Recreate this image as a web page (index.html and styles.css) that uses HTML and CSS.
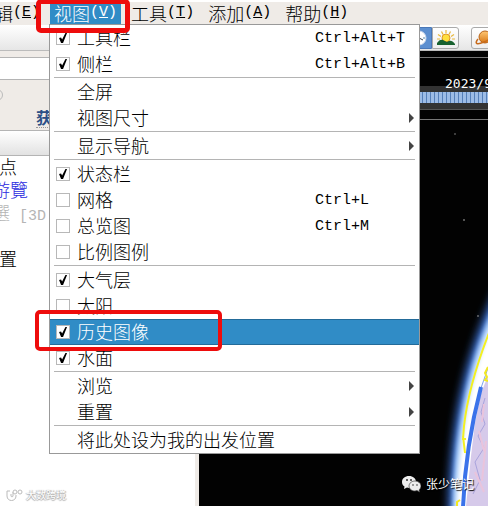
FILE: index.html
```
<!DOCTYPE html>
<html lang="zh-CN">
<head>
  <meta charset="UTF-8" />
  <meta name="viewport" content="width=device-width, initial-scale=1.0"/>
  <title>Earth</title>
  <link rel="stylesheet" href="styles.css">
</head>
<body>
  <nav class="menubar">
    <button class="menu-btn first">辑<span class="mono">(<u>E</u>)</span></button>
    <div class="menu-wrap">
      <button class="menu-btn active">视图<span class="mono">(<u>V</u>)</span></button>
      <div class="menu">
        <label class="item"><input type="checkbox" checked><span class="name">工具栏</span><span class="mono key">Ctrl+Alt+T</span></label>
        <label class="item"><input type="checkbox" checked><span class="name">侧栏</span><span class="mono key">Ctrl+Alt+B</span></label>
        <hr>
        <button class="item plain">全屏</button>
        <button class="item plain sub">视图尺寸</button>
        <hr>
        <button class="item plain sub">显示导航</button>
        <hr>
        <label class="item"><input type="checkbox" checked><span class="name">状态栏</span></label>
        <label class="item"><input type="checkbox"><span class="name">网格</span><span class="mono key">Ctrl+L</span></label>
        <label class="item"><input type="checkbox"><span class="name">总览图</span><span class="mono key">Ctrl+M</span></label>
        <label class="item"><input type="checkbox"><span class="name">比例图例</span></label>
        <hr>
        <label class="item"><input type="checkbox" checked><span class="name">大气层</span></label>
        <label class="item"><input type="checkbox"><span class="name">太阳</span></label>
        <label class="item selected"><input type="checkbox" checked><span class="name">历史图像</span></label>
        <label class="item"><input type="checkbox" checked><span class="name">水面</span></label>
        <hr>
        <button class="item plain sub">浏览</button>
        <button class="item plain sub">重置</button>
        <hr>
        <button class="item plain">将此处设为我的出发位置</button>
      </div>
      <div class="mark mark-title"></div>
      <div class="mark mark-item"></div>
    </div>
    <button class="menu-btn">工具<span class="mono">(<u>T</u>)</span></button>
    <button class="menu-btn">添加<span class="mono">(<u>A</u>)</span></button>
    <button class="menu-btn">帮助<span class="mono">(<u>H</u>)</span></button>
  </nav>

  <div class="toolbar">
    <button class="tool pressed" aria-label="历史图像">
      <svg width="20" height="20" viewBox="0 0 20 20">
        <circle cx="10" cy="10" r="7" fill="#fff" stroke="#c9d6ea"/>
        <path d="M10 10V5M10 10l4 2" stroke="#345" fill="none"/>
        <path d="M14 10h2M10 14v2" stroke="#58a"/>
      </svg>
    </button>
    <button class="tool" aria-label="太阳">
      <svg width="20" height="18" viewBox="0 0 20 18">
        <path d="M10 1v3M5.500 2.500l1.500 3M14.500 2.500l-1.500 3M2 5.500l3 2M18 5.500l-3 2M1 10h3M19 10h-3" stroke="#e9b93c" stroke-width="1.200"/>
        <circle cx="10" cy="9" r="4" fill="#ffdf3d" stroke="#e0962a"/>
        <path d="M1 16v-2c2-3 4-4 6-3l4 2c3-2 5-2 8 2v1z" fill="#17612f"/>
      </svg>
    </button>
    <button class="tool planet" aria-label="行星">
      <svg width="24" height="20" viewBox="0 0 24 20">
        <defs>
          <linearGradient id="saturn" x1="0" y1="0" x2="0" y2="1">
            <stop offset="0" stop-color="#ffc875"/>
            <stop offset="1" stop-color="#d87816"/>
          </linearGradient>
        </defs>
        <circle cx="12" cy="9" r="6" fill="url(#saturn)" stroke="#b8641a"/>
        <path d="M5 11c-4 5-1 6 6 3s14-9 11-11c-1-1-3 0-5 1" fill="none" stroke="#c76b1c" stroke-width="1.500"/>
      </svg>
    </button>
  </div>

  <main class="main">
    <aside class="sidebar">
      <div class="search"></div>
      <div class="hints">
        <span class="ring"></span>
        <a href="#" class="directions">获</a>
      </div>
      <div class="panel-head"></div>
      <ul class="tree">
        <li>点</li>
        <li class="cut"><a href="#">游覽</a></li>
        <li class="cut off">選<span class="mono"> [3D</span></li>
        <li></li>
        <li>置</li>
      </ul>
      <div class="brand">
        <svg width="17" height="13" viewBox="0 0 17 13">
          <path d="M4 2H1v5c0 6 9 6 9 0V6M5 5v2c0 1 2 1 2 0V3" fill="none" stroke="#bbb"/>
          <circle cx="9" cy="3" r="2" fill="#fff" stroke="#bbb"/>
          <circle cx="14" cy="3" r="2" fill="#fff" stroke="#bbb"/>
        </svg>
        <span>大数跨境</span>
      </div>
    </aside>

    <section class="view">
      <svg class="globe" width="60" height="270" viewBox="0 -50 60 270">
        <defs>
          <filter id="glow" x="-50%" y="-20%" width="200%" height="140%"><feGaussianBlur stdDeviation="4"/></filter>
          <filter id="edge" x="-50%" y="-20%" width="200%" height="140%"><feGaussianBlur stdDeviation="2"/></filter>
        </defs>
        <!-- atmosphere -->
        <path d="M74 -10C44 52 20 118 20 240H90V-10z" fill="#3a70d0" filter="url(#glow)"/>
        <path d="M74 2C47 58 25 122 24 240H90V2z" fill="#a9cdfa" filter="url(#edge)"/>
        <path d="M74 14C51 63 30 125 28 240H90V14z" fill="#fff" filter="url(#edge)"/>
        <!-- sea and land -->
        <path d="M60 90L53 107 47 137 43 170 38 220H60z" fill="#d6caea"/>
        <path d="M57 112l-4 14 4 12-7 12 6 12-9 14 5 18-7 14" fill="none" stroke="#a9a3dc"/>
        <path d="M56 118l-2 18M51 145l5 20M47 186l9 20M58 155l-4 40" stroke="#e9c4dc" stroke-width="2"/>
        <path d="M60 82L53 102" stroke="#7da2ee"/>
        <path d="M53 101C47 124 37 165 35 222" fill="none" stroke="#3a72ea" stroke-width="4"/>
        <!-- borders -->
        <path d="M61 47C52 70 40 105 36 140l-1 13h3M35 150l2 17" fill="none" stroke="#f3f021" stroke-width="2"/>
        <path d="M60 81l-3 6 2 4-2 3 3 1M29 221v-5l3-2" fill="none" stroke="#f3e921" stroke-width="2"/>
      </svg>
      <svg class="stars" width="34" height="190" viewBox="0 0 34 190">
        <circle cx="5" cy="4" r=".8" fill="#888"/>
        <circle cx="14" cy="90" r=".8" fill="#bbb"/>
        <circle cx="28" cy="186" r=".8" fill="#aaa"/>
      </svg>
      <div class="timeline">
        <div class="date">2023/9</div>
        <div class="ticks"></div>
      </div>
      <div class="account">
        <svg width="19" height="18" viewBox="0 0 19 18">
          <path d="M7 1C3 1 0 3.500 0 7c0 2 1 3.500 2.500 4.500L2 14l3-1.500 2 .5c4 0 7-2.500 7-6S11 1 7 1z" fill="#ededed"/>
          <path d="M13 6c-3 0-6 2-6 5s3 5 6 5l2-.5 2.500 1.500-.5-2c1-1 2-2.500 2-4 0-3-3-5-6-5z" fill="#ededed" stroke="#444" stroke-width=".7"/>
          <circle cx="5" cy="5" r="1" fill="#333"/><circle cx="9" cy="5" r="1" fill="#333"/>
          <circle cx="11" cy="10" r=".8" fill="#333"/><circle cx="15" cy="10" r=".8" fill="#333"/>
        </svg>
        <span>张少笔记</span>
      </div>
    </section>
  </main>
</body>
</html>
```
FILE: styles.css
```
:root {
  --chrome: #efebe7;
  --line: #b4b4b4;
  --blue: #308cc6;
  --red: #ee0c0c;
}

* {
  box-sizing: border-box;
}

body {
  margin: 0;
  min-height: 100vh;
  display: flex;
  flex-direction: column;
  overflow: hidden;
  background: #fff;
  color: #000;
  font-family: "Noto Sans CJK SC", sans-serif;
  font-size: 18px;
  font-weight: 300;
}

button {
  margin: 0;
  border: 0;
  background: none;
  color: inherit;
  font: inherit;
  white-space: nowrap;
}

.mono {
  font-family: "Liberation Mono", monospace;
  font-size: 15px;
  white-space: pre;
}

/* menu bar */
.menubar {
  display: flex;
  gap: 6px;
  height: 25px;
  padding-top: 2px;
  border-top: 2px solid #fff;
  background: var(--chrome);
}

.menu-btn {
  flex: none;
  display: flex;
  align-items: center;
  height: 21px;
  padding: 0 4px 3px;
  line-height: 18px;
}

.menu-btn.first {
  margin-left: -9px;
}

.menu-btn.active {
  background: var(--blue);
  color: #fff;
}

.menu-wrap {
  position: relative;
  z-index: 2;
  display: flex;
}

.menu {
  position: absolute;
  top: 20px;
  left: -1px;
  width: 371px;
  border: 1px solid #999;
  background: #fff;
}

.menu hr {
  height: 1px;
  margin: 0 4px 1px;
  border: 0;
  background: var(--line);
}

.item {
  display: flex;
  align-items: center;
  width: 100%;
  height: 26px;
  padding: 0 5px 0 6px;
  line-height: 24px;
  text-align: left;
}

.item input {
  appearance: none;
  flex: none;
  width: 14px;
  height: 14px;
  margin: 0 7px 0 0;
  border: 1px solid #b8b8b8;
  background: #fff;
}

.item input:checked::before {
  content: "";
  display: block;
  width: 8px;
  height: 10px;
  margin: 1px 2px;
  background: #000;
  clip-path: polygon(0 50%, 25% 45%, 38% 65%, 80% 0, 100% 0, 50% 100%, 25% 100%);
}

.name {
  flex: 1;
  padding-bottom: 2px;
}

.key {
  width: 99px;
  padding-top: 2px;
}

.plain {
  padding-bottom: 2px;
  padding-left: 27px;
}

.sub::after {
  content: "";
  margin: 2px 0 0 auto;
  border: 5px solid transparent;
  border-left-color: #444;
  border-right: 0;
}

.selected {
  border-top: 1px solid #236b99;
  border-bottom: 1px solid #236b99;
  background: var(--blue);
  color: #fff;
}

.mark {
  position: absolute;
  border: 5px solid var(--red);
  border-radius: 5px;
}

.mark-title {
  top: -5px;
  left: -14px;
  width: 94px;
  height: 34px;
}

.mark-item {
  top: 306px;
  left: -15px;
  width: 187px;
  height: 41px;
  border-width: 4px;
}

/* tool bar */
.toolbar {
  display: flex;
  height: 26px;
  padding: 2px 0 2px 405px;
  border-bottom: 1px solid #bbb;
  background: linear-gradient(#fff, #e6e6e6);
}

.tool {
  flex: none;
  display: grid;
  place-items: center;
  width: 27px;
  height: 22px;
  padding: 0;
  border: 1px solid #aaa;
  border-radius: 0 3px 3px 0;
  background: linear-gradient(#fff, #eee);
}

.tool.pressed {
  border-color: #4a78b8;
  border-radius: 3px 0 0 3px;
  background: #5c8fd0;
}

.planet {
  margin-left: 12px;
  border-radius: 3px 0 0 3px;
}

.main {
  flex: 1;
  display: flex;
}

/* left panel */
.sidebar {
  flex: none;
  display: flex;
  flex-direction: column;
  width: 199px;
  padding-top: 6px;
  border-right: 4px solid var(--chrome);
  background: var(--chrome);
}

.search {
  height: 23px;
  border: solid var(--line);
  border-width: 1px 0;
  background: #fff;
}

.hints {
  display: flex;
  height: 50px;
}

.ring {
  width: 12px;
  height: 12px;
  margin: 9px 0 0 -9px;
  border: 1px solid #bbb;
  border-radius: 50%;
}

.directions {
  align-self: flex-end;
  height: 20px;
  margin: 0 0 2px 33px;
  border-bottom: 1px dotted #999;
  color: #2b4f86;
  font-size: 16px;
  font-weight: 700;
  line-height: 18px;
  text-decoration: none;
}

.panel-head {
  height: 26px;
  border: solid var(--line);
  border-width: 1px 0;
  background: linear-gradient(#fff, #e2e2e2);
}

.tree {
  flex: 1;
  margin: 0;
  padding: 0;
  list-style: none;
  background: #fff;
}

.tree li {
  height: 23px;
  margin-left: -1px;
  line-height: 20px;
}

.tree .cut {
  margin-left: -8px;
}

.tree a {
  color: #2b2be0;
  text-decoration: none;
}

.tree .off {
  color: #b5b5b5;
}

.brand {
  display: flex;
  align-items: center;
  gap: 3px;
  padding: 0 0 4px 6px;
  background: #fff;
  color: #fff;
  font-size: 10px;
  font-weight: 400;
  line-height: 14px;
  text-shadow: 0 1px 1px #aaa, 1px 0 1px #aaa, -1px 0 1px #bbb;
}

/* 3D view */
.view {
  flex: 1;
  min-width: 0;
  position: relative;
  display: flex;
  flex-direction: column;
  justify-content: space-between;
  overflow: hidden;
  padding-top: 6px;
  background: #020202;
}

.globe {
  position: absolute;
  right: 0;
  bottom: 0;
}

.stars {
  position: absolute;
  top: 79px;
  right: 4px;
}

.timeline {
  height: 63px;
  padding-top: 17px;
  border: solid #777;
  border-width: 1px 0;
  color: #fff;
}

.date {
  height: 17px;
  padding-left: 246px;
  font-family: "DejaVu Sans Mono", monospace;
  font-size: 13px;
  font-weight: 400;
  line-height: 17px;
  white-space: nowrap;
  background: linear-gradient(transparent 11px, #333 11px);
}

.ticks {
  height: 17px;
  border: solid #333;
  border-width: 0 0 6px;
  background: repeating-linear-gradient(90deg, #9dbce6 0 3px, #557fb8 3px 4px);
  box-shadow: 0 1px #555;
}

.account {
  position: relative;
  display: flex;
  align-items: center;
  gap: 5px;
  padding: 0 14px 12px 0;
  margin-left: auto;
  color: #fff;
  font-size: 12px;
  font-weight: 400;
  line-height: 20px;
  text-shadow: 1px 1px 1px #000;
}
```
